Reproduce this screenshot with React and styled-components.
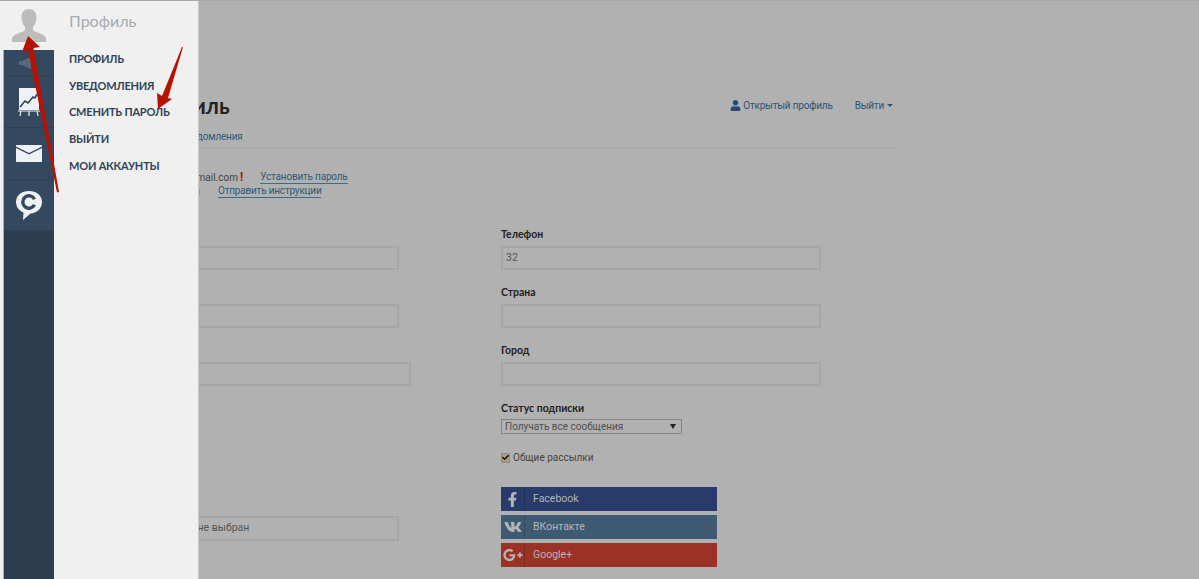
import React from 'react'
import styled, { createGlobalStyle } from 'styled-components'
import { FaFacebookF, FaVk, FaGooglePlusG, FaUser, FaCheck } from 'react-icons/fa'

const GlobalStyle = createGlobalStyle`
html, body {
  margin: 0;
  height: 100%;
  overflow: hidden;
  background: #b1b1b1;
}
* { box-sizing: border-box; }
`
const Page = styled.div`
position: relative;
height: 579px;
overflow: hidden;
font-family: Roboto, "Liberation Sans", sans-serif;
border-top: 1px solid #a8a8a8;
`
const Main = styled.main`
width: 900px;
padding: 92px 0 0 79px;
`
const Header = styled.header`
display: flex;
justify-content: space-between;
align-items: center;
height: 24px;
`
const Title = styled.h1`
margin: 0 0 0 9px;
font-family: Lato, Roboto, sans-serif;
font-size: 22px;
font-weight: 700;
color: #222;
`
const HeaderLinks = styled.div`
display: flex;
align-items: center;
gap: 22px;
padding-right: 7px;
font-size: 10px;
letter-spacing: -0.2px;
color: #2d5275;
`
const HeaderLink = styled.span`
display: flex;
align-items: center;
gap: 2px;
`
const Caret = styled.i`
width: 0;
height: 0;
margin-left: 1px;
border-left: 3.5px solid transparent;
border-right: 3.5px solid transparent;
border-top: 3.5px solid #2d5275;
`
const Tabs = styled.nav`
display: flex;
gap: 14px;
margin-top: 13px;
padding: 0 0 5px 46px;
border-bottom: 1px solid #a9a9a9;
font-size: 10px;
letter-spacing: -0.2px;
line-height: 13px;
color: #2d5a78;
`
const AccountRow = styled.div`
display: flex;
align-items: center;
height: 14px;
font-size: 10px;
color: #444;
&:first-of-type { margin-top: 21px; }
`
const AccountText = styled.span`
width: ${p => p.$width}px;
text-align: right;
white-space: nowrap;
color: ${p => p.$red ? '#8a3a3a' : '#444'};
`
const Warn = styled.b`
color: #b01010;
font-size: 12px;
margin-left: 2px;
`
const TextLink = styled.span`
margin-left: ${p => p.$left}px;
color: #2d5a78;
border-bottom: 1px solid #3e6c8a;
letter-spacing: -0.2px;
line-height: 12px;
`
const FormGrid = styled.div`
display: grid;
grid-template-columns: 422px 320px;
margin-top: 29px;
`
const Column = styled.div`
display: flex;
flex-direction: column;
`
const Label = styled.label`
display: block;
height: ${p => p.$height || 19}px;
margin-top: ${p => p.$top || 0}px;
font-family: Lato, Roboto, sans-serif;
font-size: 10.5px;
font-weight: 700;
line-height: 14px;
color: #222;
`
const Field = styled.div`
margin-bottom: ${p => p.$gap ?? 15}px;
`
const Input = styled.div`
width: ${p => p.$width || 320}px;
height: ${p => p.$height || 24}px;
padding-left: ${p => p.$indent || 3}px;
border: 2px solid #a6a6a6;
font-size: 10.5px;
line-height: 20px;
color: #555;
`
const SelectBox = styled.div`
display: flex;
align-items: center;
justify-content: space-between;
width: 181px;
height: 15px;
padding: 0 5px 0 3px;
border: 1px solid #858585;
font-size: 10px;
color: #505050;
`
const SelectCaret = styled.i`
width: 0;
height: 0;
border-left: 3px solid transparent;
border-right: 3px solid transparent;
border-top: 5px solid #222;
`
const CheckRow = styled.div`
display: flex;
align-items: center;
gap: 3px;
margin-top: 18px;
font-size: 10px;
color: #444;
`
const CheckBox = styled.span`
display: flex;
align-items: center;
justify-content: center;
width: 9px;
height: 10px;
background: #a89c78;
border: 1px solid #8a8a8a;
border-radius: 1px;
color: #111;
font-size: 7px;
`
const Socials = styled.div`
display: flex;
flex-direction: column;
gap: 4px;
width: 216px;
margin-top: 24px;
`
const SocialButton = styled.div`
display: flex;
align-items: center;
height: 24px;
background: ${p => p.$bg};
color: #b5b5b5;
font-size: 10.5px;
`
const SocialIcon = styled.span`
display: flex;
align-items: center;
justify-content: center;
width: 24px;
height: 100%;
margin-right: 8px;
border-right: 1px solid rgba(0, 0, 0, 0.18);
font-size: ${p => p.$size}px;
`
const SocialLabel = styled.span`
margin-top: -2px;
`
const Drawer = styled.aside`
position: absolute;
top: 0;
left: 0;
bottom: 0;
display: flex;
width: 199px;
background: #f0f0f0;
border-right: 1px solid #c6c6c6;
`
const RailColumn = styled.div`
display: flex;
flex-direction: column;
width: 54px;
`
const Avatar = styled.div`
display: flex;
justify-content: center;
height: 49px;
padding: 8px 0 0 4px;
`
const Rail = styled.div`
flex: 1;
margin-left: 3px;
background: #2c3d50;
border-left: 1px solid #a8a8a8;
`
const RailItem = styled.div`
display: flex;
align-items: center;
justify-content: center;
height: ${p => p.$height}px;
background: #34495f;
border-bottom: 1px solid #2d4055;
`
const Menu = styled.div`
padding: 11px 0 0 15px;
font-family: Lato, Roboto, sans-serif;
`
const MenuTitle = styled.div`
margin-bottom: 22px;
font-size: 16px;
line-height: 17px;
color: #a4abb3;
`
const MenuItem = styled.div`
height: 26.7px;
font-size: 11px;
font-weight: 700;
line-height: 16px;
letter-spacing: -0.2px;
color: #2f4358;
white-space: nowrap;
`
const Arrows = styled.svg`
position: absolute;
top: 0;
left: 0;
pointer-events: none;
`

const fields = ['Имя', 'Фамилия', 'Логин']
const menu = ['ПРОФИЛЬ', 'УВЕДОМЛЕНИЯ', 'СМЕНИТЬ ПАРОЛЬ', 'ВЫЙТИ', 'МОИ АККАУНТЫ']

const App = () => {
  return (
    <Page>
      <GlobalStyle />
      <Main>
        <Header>
          <Title>Мой профиль</Title>
          <HeaderLinks>
            <HeaderLink><FaUser size={11} color="#1f4c78" />Открытый профиль</HeaderLink>
            <HeaderLink>Выйти<Caret /></HeaderLink>
          </HeaderLinks>
        </Header>
        <Tabs>
          <span>Профиль</span>
          <span>Уведомления</span>
        </Tabs>
        <AccountRow>
          <AccountText $width={159}>Email: user.name@gmail.com</AccountText>
          <Warn>!</Warn>
          <TextLink $left={17}>Установить пароль</TextLink>
        </AccountRow>
        <AccountRow>
          <AccountText $width={121} $red>Не подтвержден</AccountText>
          <TextLink $left={18}>Отправить инструкции</TextLink>
        </AccountRow>
        <FormGrid>
          <Column>
            {fields.map((label, i) => (
              <Field key={label}>
                <Label>{label}</Label>
                <Input $width={i === 2 ? 332 : 320} />
              </Field>
            ))}
            <Field $gap={0}>
              <Label $top={96}>Аватар</Label>
              <Input $height={25} $indent={88}>Файл не выбран</Input>
            </Field>
          </Column>
          <Column>
            <Field><Label>Телефон</Label><Input>32</Input></Field>
            <Field><Label>Страна</Label><Input /></Field>
            <Field><Label>Город</Label><Input /></Field>
            <Label $height={18}>Статус подписки</Label>
            <SelectBox>Получать все сообщения<SelectCaret /></SelectBox>
            <CheckRow><CheckBox><FaCheck /></CheckBox>Общие рассылки</CheckRow>
            <Socials>
              <SocialButton $bg="#283b6b"><SocialIcon $size={15}><FaFacebookF /></SocialIcon><SocialLabel>Facebook</SocialLabel></SocialButton>
              <SocialButton $bg="#3f5a73"><SocialIcon $size={18}><FaVk /></SocialIcon><SocialLabel>ВКонтакте</SocialLabel></SocialButton>
              <SocialButton $bg="#9c3226"><SocialIcon $size={20}><FaGooglePlusG /></SocialIcon><SocialLabel>Google+</SocialLabel></SocialButton>
            </Socials>
          </Column>
        </FormGrid>
      </Main>
      <Drawer>
        <RailColumn>
          <Avatar>
            <svg width="34" height="33" viewBox="0 0 34 33">
              <path fill="#bcbcbc" d="M17 0c4.600 0 7.500 3.400 7.500 8 0 3.700-1.300 7.500-3.500 10v3.300c1.800 1.800 12.200 4 13 7.700v4H0v-4c.8-3.700 11.200-5.900 13-7.700V18c-2.200-2.500-3.500-6.300-3.500-10C9.500 3.400 12.400 0 17 0z" />
            </svg>
          </Avatar>
          <Rail>
            <RailItem $height={27}>
              <svg width="20" height="14" viewBox="0 0 20 14">
                <path fill="#55687c" d="M0 5h3l9-4v12L3 9H0z" />
              </svg>
            </RailItem>
            <RailItem $height={51}>
              <svg width="22" height="29" viewBox="0 0 22 29">
                <path fill="#eef2f4" d="M1 0h20v22H1z" />
                <path fill="none" stroke="#2f4358" strokeWidth="1.600" d="M2 19l5-6 3 2 5-6 2 1 2-4" />
                <path fill="none" stroke="#eef2f4" strokeWidth="1.200" d="M0 23h22M3 23l-1 5M11 23v5M19 23l1 5" />
              </svg>
            </RailItem>
            <RailItem $height={52}>
              <svg width="26" height="17" viewBox="0 0 26 17">
                <path fill="#eef2f4" d="M1 0h24c.6 0 1 .4 1 1v.5L13 8 0 1.500V1c0-.6.400-1 1-1zM0 3l13 6.500L26 3v13c0 .6-.4 1-1 1H1c-.6 0-1-.4-1-1z" />
              </svg>
            </RailItem>
            <RailItem $height={51}>
              <svg width="26" height="29" viewBox="0 0 26 29">
                <path fill="#eef2f4" d="M13 0c7.500 0 13 4.500 13 11S20.500 22.500 14.500 22.500L7 29l.5-7.500C3 19.500 0 16 0 11 0 4.500 5.500 0 13 0z" />
                <path fill="none" stroke="#34495f" strokeWidth="3.400" d="M18.500 8.200A6.200 6.200 0 1 0 18.500 13.800" />
              </svg>
            </RailItem>
          </Rail>
        </RailColumn>
        <Menu>
          <MenuTitle>Профиль</MenuTitle>
          {menu.map(item => <MenuItem key={item}>{item}</MenuItem>)}
        </Menu>
      </Drawer>
      <Arrows width="199" height="200" viewBox="0 0 199 200">
        <path fill="#b81200" d="M28 35l12 11-6.500 1L59 191l-2 .5L28 49l-6 2z" />
        <path fill="#b81200" d="M183 46l-15 51 4 1-14 10-1-16 5 3 20-49z" />
      </Arrows>
    </Page>
  )
}

export default App
